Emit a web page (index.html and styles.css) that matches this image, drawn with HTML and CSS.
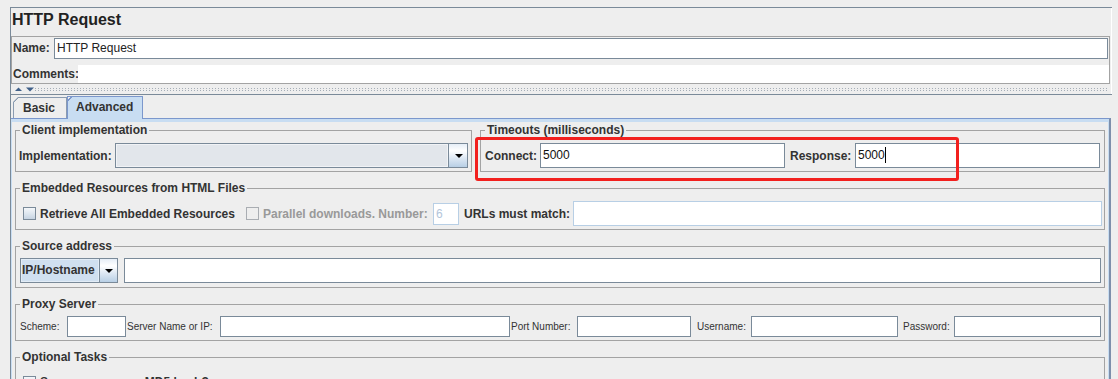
FILE: index.html
```html
<!DOCTYPE html>
<html>
<head>
<meta charset="utf-8">
<title>HTTP Request</title>
<link rel="stylesheet" href="styles.css">
</head>
<body>
<div class="editor">
  <div class="top">
    <div class="title">HTTP Request</div>
    <div class="namepanel">
      <div class="namerow">
        <span class="lbl lbl-name">Name:</span>
        <div class="tf tf-name">HTTP Request</div>
      </div>
      <div class="commentsrow">
        <span class="lbl lbl-comments">Comments:</span>
        <div class="comments-area"></div>
      </div>
    </div>
    <div class="splitter">
      <svg class="split-arrows" width="20" height="5" viewBox="0 0 20 5"><path d="M0 4 L3.5 0.5 L7 4 Z"/><path d="M11 0.5 L19 0.5 L15 4.5 Z"/></svg>
      <div class="dots"></div>
    </div>
  </div>
  <div class="lower">
    <div class="tabs">
      <div class="tab tab-basic">Basic</div>
      <div class="tab tab-sel">Advanced</div>
    </div>
    <div class="tabcontent">
      <div class="row1">
        <fieldset class="fs fs-client">
          <legend>Client implementation</legend>
          <div class="fsrow client-row">
            <span class="lbl lbl-impl">Implementation:</span>
            <div class="combo combo-impl">
              <div class="cv cv-impl"></div>
              <div class="cbtn"><svg width="8" height="4" viewBox="0 0 8 4"><path d="M0 0 H8 L4 4 Z"/></svg></div>
            </div>
          </div>
        </fieldset>
        <fieldset class="fs fs-timeouts">
          <legend>Timeouts (milliseconds)</legend>
          <div class="fsrow timeouts-row">
            <span class="lbl lbl-connect">Connect:</span>
            <div class="tf tf-time">5000</div>
            <span class="lbl lbl-response">Response:</span>
            <div class="tf tf-time">5000<span class="caret"></span></div>
          </div>
        </fieldset>
        <div class="annot"></div>
      </div>

      <fieldset class="fs">
        <legend>Embedded Resources from HTML Files</legend>
        <div class="fsrow embed-row">
          <span class="chk"></span>
          <span class="lbl lbl-retrieve">Retrieve All Embedded Resources</span>
          <span class="chk chk-dis"></span>
          <span class="lbl lbl-parallel">Parallel downloads. Number:</span>
          <div class="tf tf-dis tf-six">6</div>
          <span class="lbl lbl-urls">URLs must match:</span>
          <div class="tf tf-dis tf-urls"></div>
        </div>
      </fieldset>

      <fieldset class="fs">
        <legend>Source address</legend>
        <div class="fsrow source-row">
          <div class="combo combo-ip">
            <div class="cv cv-ip">IP/Hostname</div>
            <div class="cbtn"><svg width="8" height="4" viewBox="0 0 8 4"><path d="M0 0 H8 L4 4 Z"/></svg></div>
          </div>
          <div class="tf tf-source"></div>
        </div>
      </fieldset>

      <fieldset class="fs">
        <legend>Proxy Server</legend>
        <div class="fsrow proxy-row">
          <span class="plbl pl-scheme">Scheme:</span>
          <div class="tf pf-scheme"></div>
          <span class="plbl pl-server">Server Name or IP:</span>
          <div class="tf pf-server"></div>
          <span class="plbl pl-port">Port Number:</span>
          <div class="tf pf-port"></div>
          <span class="plbl pl-user">Username:</span>
          <div class="tf pf-user"></div>
          <span class="plbl pl-pass">Password:</span>
          <div class="tf pf-pass"></div>
        </div>
      </fieldset>

      <fieldset class="fs">
        <legend>Optional Tasks</legend>
        <div class="fsrow optional-row">
          <span class="chk"></span>
          <span class="lbl lbl-md5">Save response as MD5 hash?</span>
        </div>
      </fieldset>
    </div>
  </div>
</div>
</body>
</html>
```

FILE: styles.css
```css
html, body {
  margin: 0;
  padding: 0;
  overflow: hidden;
  background: #eeeeee;
}
body {
  width: 1118px;
  height: 379px;
  font-family: "Liberation Sans", Arial, sans-serif;
  font-size: 12px;
  color: #333333;
}

.editor {
  box-sizing: border-box;
  width: 1102px;
  margin: 7px 0 0 10px;
  border-left: 1px solid #7a8a99;
  border-top: 1px solid #7a8a99;
}

.top {
  border-right: 1px solid #ffffff;
}

.title {
  font-size: 16px;
  font-weight: bold;
  line-height: 20px;
  padding: 2px 0 6px 1px;
  color: #222222;
}

.namepanel {
  box-sizing: border-box;
  width: 1099px;
  border: 1px solid #a3a3a3;
  padding-top: 1px;
}

.lbl {
  font-weight: bold;
  white-space: nowrap;
  box-sizing: border-box;
  flex: none;
}

.namerow {
  display: flex;
  height: 21px;
}
.lbl-name {
  width: 42px;
  padding-left: 1px;
  line-height: 21px;
}
.tf {
  box-sizing: border-box;
  background: #ffffff;
  border: 1px solid #7a8a99;
  color: #222222;
  white-space: nowrap;
  flex: none;
}
.tf-name {
  flex: 1;
  margin-right: 1px;
  padding-left: 2px;
  line-height: 19px;
}

.commentsrow {
  display: flex;
  height: 18px;
  margin-top: 6px;
}
.lbl-comments {
  width: 66px;
  padding-left: 1px;
  line-height: 18px;
}
.comments-area {
  flex: 1;
  background: #ffffff;
}

.splitter {
  display: flex;
  align-items: flex-start;
  height: 10px;
  padding-top: 3px;
  box-sizing: border-box;
}
.split-arrows {
  display: block;
  margin-left: 4px;
  fill: #3f5f88;
}
.dots {
  flex: 1;
  height: 3px;
  margin: 1px 2px 0 0;
  background-image:
    linear-gradient(90deg, #a4adb7 1px, transparent 1px),
    linear-gradient(90deg, #a4adb7 1px, transparent 1px);
  background-size: 3px 1px, 3px 1px;
  background-position: 0 0, 0 2px;
  background-repeat: repeat-x;
}

.lower {
  border-top: 1px solid #7a8a99;
}
.tabs {
  display: flex;
  align-items: flex-end;
  height: 23px;
  padding-left: 2px;
}
.tab {
  box-sizing: border-box;
  height: 21px;
  border: 1px solid #8a9bb0;
  border-bottom: none;
  font-weight: bold;
  line-height: 20px;
  color: #333333;
  background-origin: border-box;
}
.tab-basic {
  width: 54px;
  padding-left: 9px;
  background-image: linear-gradient(135deg, #eeeeee 3.4px, #8a9bb0 3.4px, #8a9bb0 4.6px, #eeeeee 4.6px);
  clip-path: polygon(5px 0, 100% 0, 100% 100%, 0 100%, 0 5px);
}
.tab-sel {
  position: relative;
  width: 76px;
  height: 23px;
  margin-bottom: -1px;
  padding-left: 8px;
  line-height: 21px;
  border-color: #7b97cc;
  background-color: #c8ddf2;
  background-image: linear-gradient(135deg, #eeeeee 3.4px, #7b97cc 3.4px, #7b97cc 4.6px, #c8ddf2 4.6px);
}

.tabcontent {
  box-sizing: border-box;
  width: 1100px;
  border-top: 1px solid #7b97cc;
  border-right: 2px solid #7d8fab;
  padding: 4px 4px 0 4px;
  box-shadow: inset 0 3px 0 #c8ddf2, inset 1px 0 0 #c8ddf2, inset -1px 0 0 #c8ddf2;
  display: flex;
  flex-direction: column;
  gap: 9px;
  height: 400px;
}

.row1 {
  position: relative;
  display: flex;
  gap: 8px;
}

.fs {
  box-sizing: border-box;
  margin: 0;
  padding: 0;
  min-width: 0;
  border: 1px solid #a3a3a3;
}
.fs legend {
  margin-left: 4px;
  padding: 0 2px;
  font-weight: bold;
  font-size: 12px;
  line-height: 14px;
  color: #333333;
}
.fs-client {
  width: 457px;
  flex: none;
}
.fs-timeouts {
  flex: 1;
}

.fsrow {
  display: flex;
  align-items: center;
}

.client-row {
  height: 25px;
  padding: 6px 3px 3px 3px;
}
.lbl-impl {
  width: 96px;
}

.combo {
  box-sizing: border-box;
  display: flex;
  height: 25px;
  border: 1px solid #7a8a99;
}
.combo-impl {
  flex: 1;
}
.cv {
  flex: 1;
  box-sizing: border-box;
}
.cv-impl {
  background: #e2e6eb;
  box-shadow: inset 0 0 0 1px #f1f3f6;
}
.cbtn {
  box-sizing: border-box;
  width: 19px;
  border-left: 1px solid #7a8a99;
  display: flex;
  align-items: center;
  justify-content: center;
  padding-left: 1px;
  background: linear-gradient(180deg, #e6eef7 0%, #ffffff 30%, #dfe9f4 60%, #b8cfe5 100%);
  fill: #000000;
}
.cbtn svg {
  display: block;
}

.timeouts-row {
  height: 25px;
  padding: 6px 4px 3px 4px;
}
.lbl-connect {
  width: 55px;
}
.lbl-response {
  width: 70px;
  padding-left: 5px;
}
.tf-time {
  width: 245px;
  height: 25px;
  line-height: 23px;
  padding-left: 2px;
  color: #111111;
}
.caret {
  display: inline-block;
  width: 1px;
  height: 16px;
  background: #000000;
  vertical-align: -4px;
}

.annot {
  position: absolute;
  left: 460px;
  top: 14px;
  width: 484px;
  height: 44px;
  box-sizing: border-box;
  border: 3px solid #f2201e;
  border-radius: 3px;
}

.embed-row {
  height: 25px;
  padding: 6px 2px 3px 7px;
}
.chk {
  box-sizing: border-box;
  width: 13px;
  height: 13px;
  flex: none;
  border: 1px solid #7a8a99;
  background: linear-gradient(180deg, #f4f7fa 0%, #dce5ee 55%, #c6d4e2 100%);
}
.chk-dis {
  border-color: #a9adb2;
  background: #eeeeee;
}
.lbl-retrieve {
  width: 210px;
  padding-left: 4px;
}
.lbl-parallel {
  width: 174px;
  padding-left: 4px;
  color: #999999;
}
.tf-dis {
  border-color: #b8cfe5;
}
.tf-six {
  width: 26px;
  height: 22px;
  line-height: 20px;
  padding-left: 2px;
  color: #b3c6da;
}
.lbl-urls {
  width: 114px;
  padding-left: 5px;
}
.tf-urls {
  flex: 1;
  height: 25px;
}

.source-row {
  height: 25px;
  padding: 5px 3px 4px 4px;
}
.combo-ip {
  width: 98px;
  flex: none;
}
.cv-ip {
  background: #d0e0f0;
  box-shadow: inset 0 0 0 1px #e2ecf6;
  font-weight: bold;
  line-height: 23px;
  padding-left: 1px;
  color: #333333;
}
.combo-ip .cbtn {
  width: 18px;
}
.tf-source {
  flex: 1;
  height: 25px;
  margin-left: 6px;
}

.proxy-row {
  height: 21px;
  padding: 5px 3px 3px 4px;
}
.plbl {
  box-sizing: border-box;
  flex: none;
  font-size: 10px;
  white-space: nowrap;
  color: #333333;
}
.proxy-row .tf {
  height: 21px;
}
.pl-scheme { width: 47px; }
.pf-scheme { width: 59px; }
.pl-server { width: 94px; padding-left: 1px; }
.pf-server { width: 290px; }
.pl-port { width: 67px; padding-left: 1px; }
.pf-port { width: 114px; }
.pl-user { width: 60px; padding-left: 6px; }
.pf-user { width: 147px; }
.pl-pass { width: 56px; padding-left: 5px; }
.pf-pass { width: 147px; }

.optional-row {
  height: 24px;
  padding: 6px 3px 0 7px;
}
.lbl-md5 {
  padding-left: 4px;
}
```
